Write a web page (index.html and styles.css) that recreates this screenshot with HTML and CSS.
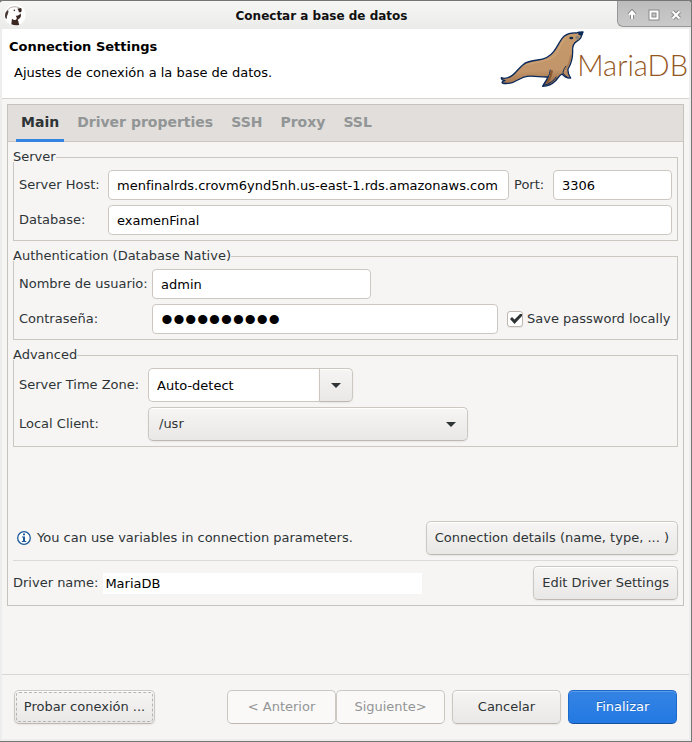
FILE: index.html
```html
<!DOCTYPE html>
<html lang="es">
<head>
<meta charset="utf-8">
<title>Conectar a base de datos</title>
<link rel="stylesheet" href="styles.css">
</head>
<body>
<form class="window">
  <header class="titlebar">
    <svg class="app-icon" viewBox="0 0 66 66" aria-hidden="true">
      <circle cx="33" cy="33" r="32" fill="#fff"/>
      <path d="M8 24 C12 14 18 10 26 9 C34 7 42 9 48 13" fill="none" stroke="#8d817c" stroke-width="2"/>
      <path d="M3 35 C3 26 7 20 13 19 C14 25 12 30 10 34 C8 38 9 42 8 45 C4 43 3 39 3 35Z" fill="#4a3b36"/>
      <path d="M40 14 L51 12 C54 16 54 22 50 25 L44 25 C45 21 43 18 40 14Z" fill="#372722"/>
      <circle cx="31" cy="19" r="2.500" fill="#372722"/>
      <path d="M35 35 C41 37 46 34 50 28 L51 36 C49 41 46 45 41 47 C44 52 44 58 46 62 C38 65 29 64 22 61 C23 54 23 48 24 44 C29 49 36 49 38 44 C39 40 37 38 35 35Z" fill="#3b2822"/>
    </svg>
    <h1 class="title">Conectar a base de datos</h1>
    <div class="controls">
      <button type="button" aria-label="Restaurar"><svg viewBox="0 0 12 12"><path class="halo" d="M6 10V3M3 6L6 2.500 9 6"/><path class="glyph" d="M6 10V3M3 6L6 2.500 9 6"/></svg></button>
      <button type="button" aria-label="Maximizar"><svg viewBox="0 0 12 12"><path class="halo" d="M2.500 2.500H9.500V9.500H2.500Z"/><path class="glyph" d="M2.500 2.500H9.500V9.500H2.500Z"/></svg></button>
      <button type="button" aria-label="Cerrar"><svg viewBox="0 0 12 12"><path class="halo" d="M2.500 2.500L9.500 9.500M9.500 2.500L2.500 9.500"/><path class="glyph" d="M2.500 2.500L9.500 9.500M9.500 2.500L2.500 9.500"/></svg></button>
    </div>
  </header>

  <section class="banner">
    <div class="banner-text">
      <h2>Connection Settings</h2>
      <p>Ajustes de conexión a la base de datos.</p>
    </div>
    <div class="brand">
      <svg class="seal" viewBox="24 90 258 174" aria-hidden="true">
        <defs>
          <linearGradient id="fur" x1="0" y1="0" x2="0.1" y2="1">
            <stop offset="0" stop-color="#c79b6b"/>
            <stop offset="0.75" stop-color="#c2956a"/>
            <stop offset="1" stop-color="#a07048"/>
          </linearGradient>
        </defs>
        <path d="M276 96 C268 96 262 96 256 99 C243 98 230 101 220 108 C208 118 202 137 188 155 C176 171 160 178 140 180 C120 182 107 185 96 194 C84 203 78 216 64 226 C54 233 42 238 31 233 C30 239 36 241 42 242 C36 242 32 246 34 249 C44 252 56 250 66 247 C80 242 92 231 108 229 C132 227 150 232 170 231 C168 243 158 250 155 259 C170 258 184 252 193 243 C200 236 204 226 213 222 C220 230 229 235 239 234 C233 225 230 216 231 207 C240 192 245 174 245 155 C244 142 247 131 256 125 C264 120 272 115 271 107 Z" fill="url(#fur)" stroke="#0b2a5c" stroke-width="4" stroke-linejoin="round"/>
        <path d="M178 209 C176 225 168 242 158 256 C174 252 188 244 196 230 M216 218 C217 210 221 203 225 198 M228 231 C222 227 218 222 216 218" fill="none" stroke="#0b2a5c" stroke-width="3"/>
        <path d="M168 249 C178 235 181 224 183 211" fill="none" stroke="#8a5630" stroke-width="6"/>
        <path d="M240 165 C237 190 228 202 220 210" fill="none" stroke="#9c6c42" stroke-width="5" opacity=".6"/>
        <path d="M104 194 C132 187 166 186 188 170 C202 157 207 132 222 116" fill="none" stroke="#dbb487" stroke-width="5" opacity=".35"/>
        <path d="M262 97 L277 95 L273 108 L262 104Z" fill="#0b2a5c"/>
        <ellipse cx="241" cy="114" rx="6" ry="4" fill="#102a4c"/>
        <circle cx="259" cy="113" r="6" fill="#8d8579"/>
      </svg>
      <span class="wordmark">MariaDB</span>
    </div>
  </section>

  <main class="content">
    <section class="panel">
      <nav class="tabs">
        <button type="button" class="tab active">Main</button>
        <button type="button" class="tab">Driver properties</button>
        <button type="button" class="tab">SSH</button>
        <button type="button" class="tab">Proxy</button>
        <button type="button" class="tab">SSL</button>
      </nav>
      <div class="page">
        <fieldset class="group server">
          <legend>Server</legend>
          <div class="grid">
            <label for="host">Server Host:</label>
            <input class="field" id="host" type="text" value="menfinalrds.crovm6ynd5nh.us-east-1.rds.amazonaws.com">
            <label for="port">Port:</label>
            <input class="field" id="port" type="text" value="3306">
            <label for="database">Database:</label>
            <input class="field wide" id="database" type="text" value="examenFinal">
          </div>
        </fieldset>

        <fieldset class="group auth">
          <legend>Authentication (Database Native)</legend>
          <div class="grid">
            <label for="user">Nombre de usuario:</label>
            <input class="field user" id="user" type="text" value="admin">
            <label for="password">Contraseña:</label>
            <div class="secret">
              <input class="field password" id="password" type="password" value="contrasena">
              <input class="check" id="save" type="checkbox" checked>
              <svg class="tick" viewBox="0 0 16 16" aria-hidden="true"><path d="M3 8L5 6 7.500 8.500 13 3 15 3 15 5 7.500 13Z" fill="#2e3436"/></svg>
              <label for="save">Save password locally</label>
            </div>
          </div>
        </fieldset>

        <fieldset class="group advanced">
          <legend>Advanced</legend>
          <div class="grid">
            <label for="zone">Server Time Zone:</label>
            <div class="combo">
              <input class="field" id="zone" type="text" value="Auto-detect">
              <button type="button" class="drop" aria-label="Abrir lista"><svg class="arrow" viewBox="0 0 10 5"><path d="M0 0H10L5 5Z"/></svg></button>
            </div>
            <label for="client">Local Client:</label>
            <div class="picker">
              <select id="client"><option>/usr</option></select>
              <svg class="arrow" viewBox="0 0 10 5" aria-hidden="true"><path d="M0 0H10L5 5Z"/></svg>
            </div>
          </div>
        </fieldset>

        <div class="hint">
          <svg class="info" viewBox="0 0 14 14" aria-hidden="true">
            <circle cx="7" cy="7" r="6.300" fill="#fff" stroke="#1c5a99" stroke-width="1.300"/>
            <path d="M6 2.500H8V4.300H6ZM5 5.500H8V10H9.200V11H4.800V10H6V6.500H5Z" fill="#1c5a99"/>
          </svg>
          <span>You can use variables in connection parameters.</span>
          <button type="button" class="button">Connection details (name, type, ... )</button>
        </div>
        <div class="driver">
          <label for="driver">Driver name:</label>
          <input id="driver" type="text" value="MariaDB" readonly>
          <button type="button" class="button">Edit Driver Settings</button>
        </div>
      </div>
    </section>
  </main>

  <footer class="actions">
    <button type="button" class="button test">Probar conexión ...</button>
    <div class="steps">
      <button type="button" class="button" disabled>&lt; Anterior</button>
      <button type="button" class="button" disabled>Siguiente&gt;</button>
    </div>
    <button type="button" class="button">Cancelar</button>
    <button type="submit" class="button primary">Finalizar</button>
  </footer>
</form>
</body>
</html>
```
FILE: styles.css
```css
* { box-sizing: border-box; }

body {
  margin: 0;
  background: #777;
  color: #2e3436;
  font: 13px/16px "DejaVu Sans", sans-serif;
}

button, input, select { font: inherit; color: inherit; margin: 0; }
h1, h2, p { margin: 0; font-size: 13px; }
svg { display: block; }

.window {
  display: flex;
  flex-direction: column;
  min-height: 100vh;
  border: 1px solid #777573;
  border-left: 0;
  border-radius: 4px 5px 0 0;
  background: #ededed;
  padding: 0 2px 2px;
  overflow: hidden;
}

/* Title bar */
.titlebar {
  display: grid;
  grid-template-columns: 26px 1fr 74px;
  align-items: center;
  height: 28px;
  margin: 0 -2px;
  background: linear-gradient(#f6f6f5, #ebebea);
}
.app-icon { width: 22px; height: 22px; margin-left: 4px; }
.title { padding-top: 2px; color: #111; font-size: 12px; font-weight: bold; text-align: center; }
.controls {
  display: flex;
  align-self: start;
  height: 26px;
  padding: 0 4px 0 3px;
  border: 1px solid #979797;
  border-width: 0 0 1px 1px;
  border-radius: 0 0 0 6px;
  background: linear-gradient(#bcbcbc, #cacaca);
}
.controls button {
  display: grid;
  place-items: center;
  flex: 1;
  padding: 2px 0 0;
  border: 0;
  background: none;
}
.controls svg { width: 12px; height: 12px; fill: none; }
.halo { stroke: #888; stroke-width: 4; }
.glyph { stroke: #fff; stroke-width: 2; }

/* Banner */
.banner {
  display: flex;
  justify-content: space-between;
  height: 70px;
  background: #fff;
  border-bottom: 1px solid #d6d3d0;
  color: #000;
}
.banner-text { padding: 10px 0 0 7px; }
.banner-text p { margin: 10px 0 0 5px; font-weight: normal; }
.brand { display: flex; padding: 1px 1px 0 0; }
.seal { width: 86px; height: 58px; }
.wordmark {
  margin-left: -8px;
  color: #955722;
  font: 300 29px/34px Lato, sans-serif;
  padding-top: 18px;
}

/* Tabbed panel */
.content {
  flex: 1;
  padding: 5px 5px 64px;
  background: #f6f5f4;
}
.panel { border: 1px solid #c6c3bf; }
.tabs {
  display: flex;
  gap: 8px;
  height: 37px;
  padding-left: 8px;
  border-bottom: 1px solid #cdc7c2;
  background: #e1dedb;
}
.tab {
  height: 37px;
  padding: 0 5px;
  border: 0;
  border-bottom: 3px solid transparent;
  background: none;
  color: #929595;
  font-size: 14px;
  font-weight: bold;
}
.tab.active { color: #2e3436; border-color: #3584e4; }
.page { padding: 10px 5px 5px; }

.group {
  min-width: 0;
  margin: 0 0 10px;
  padding: 8px 5px 5px;
  border: 1px solid #cdc7c2;
}
.group legend {
  margin-left: -6px;
  padding: 0;
  line-height: 10px;
}
.grid { display: grid; gap: 5px; align-items: center; }
.grid label { white-space: nowrap; }
.server .grid { grid-template-columns: 84px 1fr 34px 119px; }
.auth .grid { grid-template-columns: 128px 1fr; }
.advanced .grid { grid-template-columns: 124px 1fr; }
.advanced { margin-bottom: 74px; }

.field {
  width: 100%;
  min-width: 0;
  height: 30px;
  padding: 0 8px;
  border: 1px solid #cdc7c2;
  border-radius: 4px;
  background: #fff;
  color: #000;
}
.wide { grid-column: 2 / -1; }
.user { max-width: 219px; }
.secret { display: grid; grid-template-columns: 1fr auto auto 145px; align-items: center; }
.password { font: 34px/28px "Liberation Sans", sans-serif; }
.check {
  appearance: none;
  width: 16px;
  height: 16px;
  margin-left: 9px;
  border: 1px solid #bfb8b1;
  border-radius: 3px;
  background: #fff;
  box-shadow: 0 1px 1px #0001;
}
.tick { width: 16px; height: 16px; margin: 0 4px 0 -16px; pointer-events: none; visibility: hidden; z-index: 1; }
.check:checked + .tick { visibility: visible; }

.combo { display: flex; max-width: 205px; }
.combo .field { flex: 1; height: 34px; border-right: 0; border-radius: 5px 0 0 5px; }
.drop, .picker select, .button {
  height: 34px;
  border: 1px solid #cdc7c2;
  border-bottom-color: #bfb8b1;
  border-radius: 5px;
  background: linear-gradient(#f6f5f4, #eae8e6);
  box-shadow: inset 0 1px #fff, 0 1px 2px #0001;
}
.drop {
  display: grid;
  place-items: center;
  width: 34px;
  padding: 0;
  border-radius: 0 5px 5px 0;
}
.arrow { width: 10px; height: 5px; fill: #2e3436; }
.picker { display: grid; align-items: center; max-width: 320px; }
.picker > * { grid-area: 1 / 1; }
.picker select { appearance: none; width: 100%; padding: 0 10px; }
.picker .arrow { justify-self: end; margin-right: 12px; pointer-events: none; }

.hint {
  display: flex;
  align-items: center;
  padding: 0 0 5px 4px;
  border-bottom: 1px solid #dcdad8;
}
.info { width: 14px; height: 14px; margin-right: 6px; }
.hint .button, .driver .button { margin-left: auto; }
.button { padding: 0 8px; white-space: nowrap; }
.driver { display: flex; align-items: center; padding-top: 5px; }
.driver input {
  width: 319px;
  height: 21px;
  margin-left: 5px;
  padding: 0 2px;
  border: 0;
  background: #fff;
  color: #000;
}

/* Footer */
.actions {
  display: flex;
  gap: 7px;
  padding: 15px 12px;
  border-top: 1px solid #d9d6d3;
  background: #f6f5f4;
}
.actions .button { width: 109px; }
.actions .test {
  width: 141px;
  margin-right: auto;
  outline: 1px dashed #b5b5b3;
  outline-offset: -3px;
}
.steps { display: flex; }
.button:disabled { background: #faf9f8; color: #929595; box-shadow: none; }
.actions .primary {
  border-color: #1b6acb;
  border-bottom-color: #15539e;
  background: linear-gradient(#3584e4, #2379e2);
  box-shadow: inset 0 1px #5d9ce9;
  color: #fff;
  text-shadow: 0 -1px #15539e99;
}
```
